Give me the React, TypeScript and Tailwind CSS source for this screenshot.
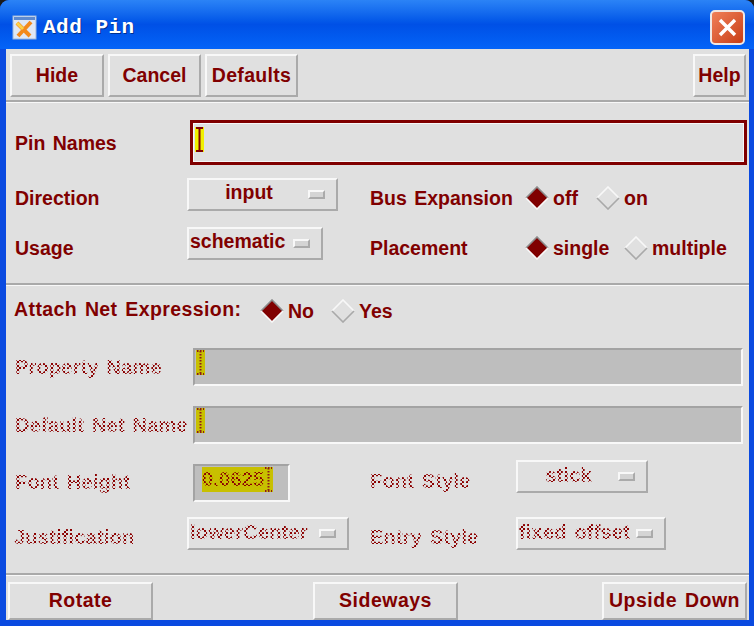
const face = "font-['Liberation_Sans',Arial,sans-serif] font-bold text-[19.5px] leading-none [word-spacing:2px] text-[#800000] whitespace-nowrap";
const label = `${face} pt-[2px]`;
const stippleText = "font-['Liberation_Sans',Arial,sans-serif] font-bold text-[20px] leading-[1.25] tracking-[0.2px] [word-spacing:2px] whitespace-nowrap text-transparent bg-clip-text bg-[length:4px_4px]";
const dots = "bg-[radial-gradient(circle_at_1px_1px,#8b0000_1.1px,transparent_1.3px),radial-gradient(circle_at_3px_3px,#8b0000_1.1px,transparent_1.3px)]";
const stipple = `${stippleText} ${dots}`;

function Button({ label, width, className = "" }: { label: string; width: string; className?: string }) {
  return (
    <button className={`${width} ${className} h-full shrink-0 bg-[#e0e0e0] border-2 border-t-[#f8f8f8] border-l-[#f8f8f8] border-b-[#aaaaaa] border-r-[#aaaaaa] flex items-center justify-center ${face}`}>
      {label}
    </button>
  );
}

function Separator() {
  return <div className="h-[3px] shrink-0 border-t-2 border-t-[#a9a9a9] bg-[#f8f8f8]" />;
}

function Diamond({ on }: { on: boolean }) {
  return (
    <svg width="24" height="24" viewBox="0 0 24 24" className="shrink-0">
      <polygon points="12,1 23,12 12,23 1,12" fill={on ? "#800000" : "#e0e0e0"} />
      <polyline points="1,12 12,1 23,12" fill="none" strokeWidth="1.6" stroke={on ? "#8c8c8c" : "#f8f8f8"} />
      <polyline points="1,12 12,23 23,12" fill="none" strokeWidth="1.6" stroke={on ? "#f8f8f8" : "#a9a9a9"} />
    </svg>
  );
}

function Radio({ text, on, width }: { text: string; on?: boolean; width: string }) {
  return (
    <div className={`${width} shrink-0 flex items-center gap-1`}>
      <Diamond on={!!on} />
      <span className={label}>{text}</span>
    </div>
  );
}

function Select({ text, width, disabled, center }: { text: string; width: string; disabled?: boolean; center?: boolean }) {
  return (
    <div className={`${width} h-[33px] self-start shrink-0 flex items-center pl-[1px] pr-[11px] border-2 border-t-[#f8f8f8] border-l-[#f8f8f8] border-b-[#aaaaaa] border-r-[#aaaaaa]`}>
      <div className={`flex-1 -mt-[3px] ${center ? "text-center" : ""}`}>
        <span className={disabled ? `inline-block ${stipple}` : face}>{text}</span>
      </div>
      <span className="w-[17px] h-[9px] shrink-0 bg-[#d4d4d4] border-2 border-t-[#f8f8f8] border-l-[#f8f8f8] border-b-[#aaaaaa] border-r-[#aaaaaa]" />
    </div>
  );
}

function Cursor({ dim }: { dim?: boolean }) {
  const c = dim ? "#8b1a1a" : "#800000";
  return (
    <svg width="9" height="25" viewBox="0 0 9 25" className={`shrink-0 ${dim ? "" : "mt-[2px]"}`}>
      <rect width="9" height="25" fill={dim ? "#c8c000" : "#f0f000"} />
      <path d="M1 1H8M4.5 1V24M1 24H8" stroke={c} strokeWidth="2" fill="none" strokeDasharray={dim ? "1.5 1.5" : undefined} />
    </svg>
  );
}

function DisabledField({ children, width }: { children: React.ReactNode; width: string }) {
  return (
    <div className={`${width} h-[38px] shrink-0 flex items-start pl-px bg-[#bebebe] border-2 border-t-[#a3a3a3] border-l-[#a3a3a3] border-b-[#f8f8f8] border-r-[#f8f8f8]`}>
      {children}
    </div>
  );
}

export default function App() {
  return (
    <div className="w-[754px] h-[626px] bg-[#1a1a1a] overflow-hidden">
      <div className="h-full rounded-t-[9px] bg-[#0a4ae0] flex flex-col overflow-hidden">
        {/* Title bar */}
        <div className="h-[49px] shrink-0 flex items-center pt-[5px] pl-3 pr-[9px] bg-gradient-to-b from-[#2b83f6] via-[#0050e6] to-[#0464f8]">
          <svg width="25" height="25" viewBox="0 0 25 25" className="shrink-0">
            <rect x="1" y="1" width="23" height="23" fill="#dfe8f5" stroke="#9db7dc" />
            <rect x="2" y="2" width="21" height="3" fill="#5d8ad0" />
            <path d="M5 8L18 21M19 7L6 21" stroke="#f28a1c" strokeWidth="4" />
            <path d="M5 8L11 14" stroke="#fbd24a" strokeWidth="3" />
          </svg>
          <span className="ml-[6px] mt-px font-['Liberation_Mono',monospace] font-bold text-[21px] leading-none text-white tracking-[0.5px] [text-shadow:1px_1px_0_#00308f] whitespace-pre">Add Pin</span>
          <button className="ml-auto w-[35px] h-[35px] rounded-[5px] border-2 border-[#f0e8e4] bg-gradient-to-br from-[#f08058] to-[#c83c10] flex items-center justify-center">
            <svg width="21" height="21" viewBox="0 0 21 21">
              <path d="M3 3L18 18M18 3L3 18" stroke="#ffffff" strokeWidth="3.4" />
            </svg>
          </button>
        </div>

        {/* Form body */}
        <div className="flex-1 ml-[6px] mb-[6px] mr-[5px] bg-[#e0e0e0] flex flex-col">
          <div className="h-[51px] shrink-0 pt-[5px] pb-[3px] pl-1 pr-[3px] flex gap-1">
            <Button label="Hide" width="w-[94px]" />
            <Button label="Cancel" width="w-[93px]" />
            <Button label="Defaults" width="w-[93px]" className="tracking-[0.3px]" />
            <div className="flex-1" />
            <Button label="Help" width="w-[53px]" />
          </div>
          <Separator />

          <div className="mt-[17px] h-[45px] shrink-0 flex items-center pl-[9px]">
            <span className={`${label} w-[175px]`}>Pin Names</span>
            <div className="flex-1 h-full mr-[2px] flex items-start pl-[2px] pt-[2px] border-[3px] border-[#800000] outline-1 -outline-offset-4 outline-[#f8f8f8]">
              <Cursor />
            </div>
          </div>

          <div className="mt-[13px] h-[40px] shrink-0 flex items-center pl-[9px]">
            <span className={`${label} w-[172px]`}>Direction</span>
            <div className="w-[183px] shrink-0 self-start">
              <Select text="input" width="w-[151px]" center />
            </div>
            <span className={`${label} w-[155px]`}>Bus Expansion</span>
            <Radio text="off" on width="w-[71px]" />
            <Radio text="on" width="w-[60px]" />
          </div>

          <div className="mt-[9px] h-[42px] shrink-0 flex items-center pl-[9px]">
            <span className={`${label} w-[172px]`}>Usage</span>
            <div className="w-[183px] shrink-0 self-start">
              <Select text="schematic" width="w-[136px]" />
            </div>
            <span className={`${label} w-[155px]`}>Placement</span>
            <Radio text="single" on width="w-[99px]" />
            <Radio text="multiple" width="w-[104px]" />
          </div>

          <div className="mt-[14px]">
            <Separator />
          </div>

          <div className="mt-[10px] h-[30px] shrink-0 flex items-center pl-2">
            <span className={`${face} tracking-[0.4px] w-[246px] -mt-[2px]`}>Attach Net Expression:</span>
            <Radio text="No" on width="w-[71px]" />
            <Radio text="Yes" width="w-[60px]" />
          </div>

          <div className="mt-[22px] h-[38px] shrink-0 flex items-center pl-[9px]">
            <div className="w-[178px] shrink-0"><span className={`inline-block ${stipple}`}>Property Name</span></div>
            <DisabledField width="w-[550px]">
              <Cursor dim />
            </DisabledField>
          </div>

          <div className="mt-[20px] h-[38px] shrink-0 flex items-center pl-[9px]">
            <div className="w-[178px] shrink-0"><span className={`inline-block ${stipple}`}>Default Net Name</span></div>
            <DisabledField width="w-[550px]">
              <Cursor dim />
            </DisabledField>
          </div>

          <div className="mt-[16px] h-[46px] shrink-0 flex items-center pl-[9px]">
            <div className="w-[178px] shrink-0 -mt-[2px]"><span className={`inline-block ${stipple}`}>Font Height</span></div>
            <div className="w-[177px] shrink-0">
              <DisabledField width="w-[97px]">
                <div className="ml-[6px] mt-px flex h-[25px] bg-[#c8c000] items-center">
                  <span className={`${stipple} w-[62px]`}>0.0625</span>
                  <Cursor dim />
                </div>
              </DisabledField>
            </div>
            <div className="w-[146px] shrink-0 -mt-[4px]"><span className={`inline-block ${stipple}`}>Font Style</span></div>
            <Select text="stick" width="w-[132px]" disabled center />
          </div>

          <div className="mt-[11px] h-[42px] shrink-0 flex items-center pl-2">
            <div className="w-[173px] shrink-0 -mt-[2px]"><span className={`inline-block ${stipple}`}>Justification</span></div>
            <div className="w-[183px] shrink-0 self-start">
              <Select text="lowerCenter" width="w-[162px]" disabled />
            </div>
            <div className="w-[146px] shrink-0 -mt-[2px]"><span className={`inline-block ${stipple}`}>Entry Style</span></div>
            <Select text="fixed offset" width="w-[150px]" disabled />
          </div>

          <div className="mt-[14px]">
            <Separator />
          </div>

          <div className="flex-1 pt-[6px] pl-[2px] pr-[2px] flex tracking-[0.5px]">
            <Button label="Rotate" width="w-[145px]" />
            <Button label="Sideways" width="w-[145px]" className="ml-[160px]" />
            <Button label="Upside Down" width="w-[145px]" className="ml-[144px]" />
          </div>
        </div>
      </div>
    </div>
  );
}
